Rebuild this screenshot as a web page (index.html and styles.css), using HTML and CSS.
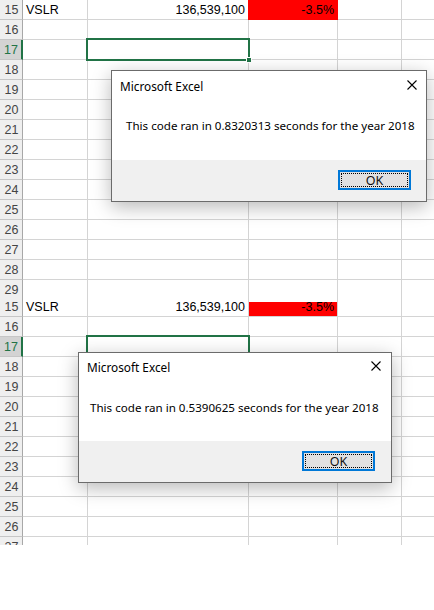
FILE: index.html
```html
<!DOCTYPE html>
<html lang="en">
<head>
<meta charset="utf-8">
<title>Excel timing</title>
<link rel="stylesheet" href="styles.css">
</head>
<body>
<section class="panel panel-top">
  <div class="grid">
    <div class="rh">15</div><div class="c">VSLR</div><div class="c num">136,539,100</div><div class="c num neg">-3.5%</div><div class="c"></div><div class="c"></div>
    <div class="rh">16</div><div class="c"></div><div class="c"></div><div class="c"></div><div class="c"></div><div class="c"></div>
    <div class="rh rh-sel">17</div><div class="c"></div><div class="c"></div><div class="c"></div><div class="c"></div><div class="c"></div>
    <div class="rh">18</div><div class="c"></div><div class="c"></div><div class="c"></div><div class="c"></div><div class="c"></div>
    <div class="rh">19</div><div class="c"></div><div class="c"></div><div class="c"></div><div class="c"></div><div class="c"></div>
    <div class="rh">20</div><div class="c"></div><div class="c"></div><div class="c"></div><div class="c"></div><div class="c"></div>
    <div class="rh">21</div><div class="c"></div><div class="c"></div><div class="c"></div><div class="c"></div><div class="c"></div>
    <div class="rh">22</div><div class="c"></div><div class="c"></div><div class="c"></div><div class="c"></div><div class="c"></div>
    <div class="rh">23</div><div class="c"></div><div class="c"></div><div class="c"></div><div class="c"></div><div class="c"></div>
    <div class="rh">24</div><div class="c"></div><div class="c"></div><div class="c"></div><div class="c"></div><div class="c"></div>
    <div class="rh">25</div><div class="c"></div><div class="c"></div><div class="c"></div><div class="c"></div><div class="c"></div>
    <div class="rh">26</div><div class="c"></div><div class="c"></div><div class="c"></div><div class="c"></div><div class="c"></div>
    <div class="rh">27</div><div class="c"></div><div class="c"></div><div class="c"></div><div class="c"></div><div class="c"></div>
    <div class="rh">28</div><div class="c"></div><div class="c"></div><div class="c"></div><div class="c"></div><div class="c"></div>
    <div class="rh">29</div><div class="c"></div><div class="c"></div><div class="c"></div><div class="c"></div><div class="c"></div>
  </div>
  <div class="sel"><span class="handle"></span></div>
  <div class="dialog dialog-top">
    <div class="dlg-body">
      <div class="dlg-head">
        <span class="dlg-title">Microsoft Excel</span>
        <span class="dlg-close"><svg width="10" height="10" viewBox="0 0 10 10"><path d="M0.5 0.5L9.5 9.5M9.5 0.5L0.5 9.5" stroke="#000" stroke-width="1.1" fill="none"/></svg></span>
      </div>
      <p class="dlg-msg">This code ran in 0.8320313 seconds for the year 2018</p>
    </div>
    <div class="dlg-foot"><span class="ok"><span class="ok-focus">OK</span></span></div>
  </div>
</section>

<section class="panel panel-bottom">
  <div class="grid">
    <div class="rh">15</div><div class="c">VSLR</div><div class="c num">136,539,100</div><div class="c num neg neg-cut">-3.5%</div><div class="c"></div><div class="c"></div>
    <div class="rh">16</div><div class="c"></div><div class="c"></div><div class="c"></div><div class="c"></div><div class="c"></div>
    <div class="rh rh-sel">17</div><div class="c"></div><div class="c"></div><div class="c"></div><div class="c"></div><div class="c"></div>
    <div class="rh">18</div><div class="c"></div><div class="c"></div><div class="c"></div><div class="c"></div><div class="c"></div>
    <div class="rh">19</div><div class="c"></div><div class="c"></div><div class="c"></div><div class="c"></div><div class="c"></div>
    <div class="rh">20</div><div class="c"></div><div class="c"></div><div class="c"></div><div class="c"></div><div class="c"></div>
    <div class="rh">21</div><div class="c"></div><div class="c"></div><div class="c"></div><div class="c"></div><div class="c"></div>
    <div class="rh">22</div><div class="c"></div><div class="c"></div><div class="c"></div><div class="c"></div><div class="c"></div>
    <div class="rh">23</div><div class="c"></div><div class="c"></div><div class="c"></div><div class="c"></div><div class="c"></div>
    <div class="rh">24</div><div class="c"></div><div class="c"></div><div class="c"></div><div class="c"></div><div class="c"></div>
    <div class="rh">25</div><div class="c"></div><div class="c"></div><div class="c"></div><div class="c"></div><div class="c"></div>
    <div class="rh">26</div><div class="c"></div><div class="c"></div><div class="c"></div><div class="c"></div><div class="c"></div>
    <div class="rh">27</div><div class="c"></div><div class="c"></div><div class="c"></div><div class="c"></div><div class="c"></div>
  </div>
  <div class="sel"><span class="handle"></span></div>
  <div class="dialog dialog-bottom">
    <div class="dlg-body">
      <div class="dlg-head">
        <span class="dlg-title">Microsoft Excel</span>
        <span class="dlg-close"><svg width="10" height="10" viewBox="0 0 10 10"><path d="M0.5 0.5L9.5 9.5M9.5 0.5L0.5 9.5" stroke="#000" stroke-width="1.1" fill="none"/></svg></span>
      </div>
      <p class="dlg-msg">This code ran in 0.5390625 seconds for the year 2018</p>
    </div>
    <div class="dlg-foot"><span class="ok"><span class="ok-focus">OK</span></span></div>
  </div>
</section>
</body>
</html>
```

FILE: styles.css
```css
* { box-sizing: border-box; }
html, body { margin: 0; padding: 0; background: #fff; }
body { width: 434px; height: 610px; overflow: hidden; font-family: "Liberation Sans", Arial, sans-serif; }

.panel { position: relative; overflow: hidden; width: 434px; }
.panel-top { height: 297px; }
.panel-bottom { height: 248px; }

.grid {
  display: grid;
  grid-template-columns: 23px 65px 161px 89px 64px 40px;
  grid-auto-rows: 20px;
  width: 447px;
}

.rh {
  background: #efefef;
  border-bottom: 1px solid #c6c6c6;
  border-right: 1px solid #a8a8a8;
  color: #444;
  font-size: 12.5px;
  line-height: 21px;
  text-align: center;
  padding-left: 1px;
}
.rh-sel {
  background: #d3d3d3;
  color: #217346;
  border-right: 2px solid #217346;
}

.c {
  border-right: 1px solid #d4d4d4;
  border-bottom: 1px solid #d4d4d4;
  font-size: 12.5px;
  line-height: 21px;
  color: #000;
  padding: 0 3px;
  white-space: nowrap;
  overflow: hidden;
}
.num { text-align: right; }
.neg { background: #ff0000; border-color: #ff0000; box-shadow: -1px 0 0 #ff0000; }
.neg-cut { background: linear-gradient(to bottom, #fff 0 5px, #ff0000 5px); box-shadow: none; border-right-color: #d4d4d4; border-bottom-color: #d4d4d4; }

.sel {
  position: absolute;
  left: 86px;
  top: 38px;
  width: 164px;
  height: 23px;
  border: 2px solid #217346;
}
.handle {
  position: absolute;
  right: -4px;
  bottom: -4px;
  width: 6px;
  height: 6px;
  background: #217346;
  border: 1px solid #fff;
}

.dialog {
  position: absolute;
  display: flex;
  flex-direction: column;
  background: #fff;
  border: 1px solid #6b6b6b;
  box-shadow: 0 5px 18px rgba(0,0,0,0.28);
  font-family: "Noto Sans", "Open Sans", sans-serif;
  color: #000;
}
.dialog-top { left: 111px; top: 70px; width: 316px; height: 132px; }
.dialog-bottom { left: 78px; top: 55px; width: 314px; height: 131px; }

.dlg-body { flex: 1; }
.dlg-head {
  display: flex;
  justify-content: space-between;
  align-items: flex-start;
  padding: 6px 9px 0 8px;
  height: 30px;
}
.dlg-title { font-size: 11.8px; line-height: 18px; }
.dlg-close { display: flex; margin-top: 3px; }
.dlg-msg {
  margin: 0;
  padding: 17px 0 0 14px;
  font-size: 11.6px;
  line-height: 16px;
  white-space: nowrap;
}
.dialog-bottom .dlg-msg { padding-left: 11px; }
.dialog-bottom .dlg-head { padding-top: 5px; padding-right: 10px; }

.dlg-foot {
  height: 41px;
  background: #f0f0f0;
  display: flex;
  justify-content: flex-end;
  align-items: flex-start;
  padding: 10px 15px 0 0;
}
.dialog-bottom .dlg-foot { padding-right: 16px; }
.ok {
  display: flex;
  width: 73px;
  height: 20px;
  border: 2px solid #0078d7;
  background: #e1e1e1;
  padding: 1px;
}
.ok-focus {
  flex: 1;
  border: 1px dotted #000;
  font-size: 12.5px;
  line-height: 13px;
  text-align: center;
  color: #111;
}
```
